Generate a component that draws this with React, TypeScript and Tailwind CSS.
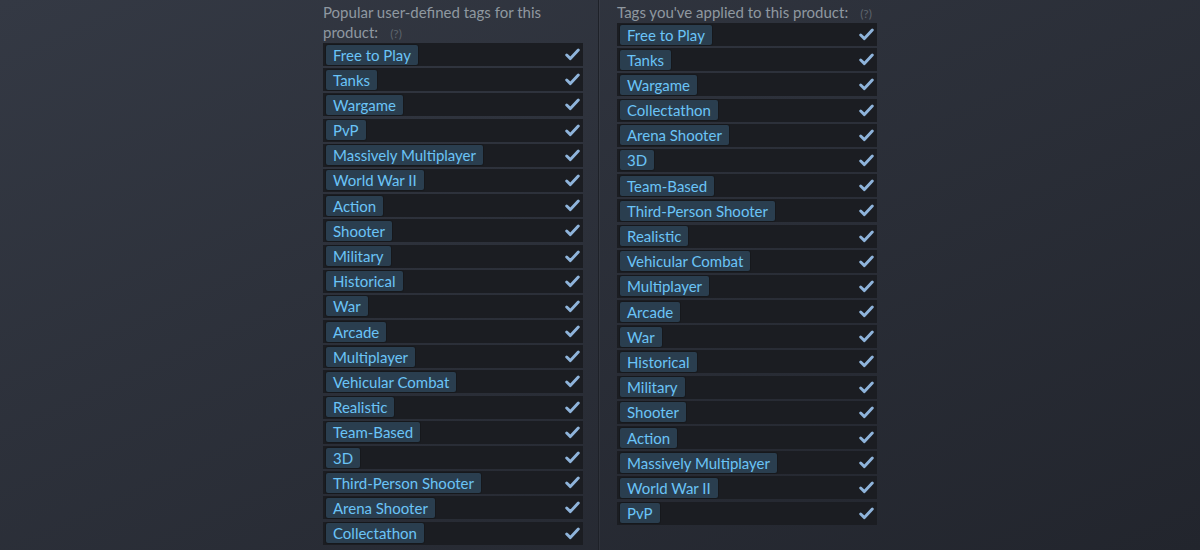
import React from 'react';

const popularTags = [
  'Free to Play',
  'Tanks',
  'Wargame',
  'PvP',
  'Massively Multiplayer',
  'World War II',
  'Action',
  'Shooter',
  'Military',
  'Historical',
  'War',
  'Arcade',
  'Multiplayer',
  'Vehicular Combat',
  'Realistic',
  'Team-Based',
  '3D',
  'Third-Person Shooter',
  'Arena Shooter',
  'Collectathon',
];

const myTags = [
  'Free to Play',
  'Tanks',
  'Wargame',
  'Collectathon',
  'Arena Shooter',
  '3D',
  'Team-Based',
  'Third-Person Shooter',
  'Realistic',
  'Vehicular Combat',
  'Multiplayer',
  'Arcade',
  'War',
  'Historical',
  'Military',
  'Shooter',
  'Action',
  'Massively Multiplayer',
  'World War II',
  'PvP',
];

function Check() {
  return (
    <svg width="15" height="13" viewBox="0 0 15 13" className="shrink-0">
      <path
        d="M1.7 7 L5.4 10.6 L13.3 2"
        fill="none"
        stroke="#8fb4db"
        strokeWidth="2.9"
        strokeLinecap="round"
        strokeLinejoin="round"
      />
    </svg>
  );
}

function TagRow({ name }: { name: string }) {
  return (
    <div className="flex h-[23px] items-center justify-between bg-[#1b1d22] pl-[3px] pr-[3px]">
      <span className="rounded-[2px] bg-[#2a3e4f] px-[7px] text-[15px] leading-[20px] text-[#6ac4f7] shadow-[0_0_0_1px_rgba(0,0,0,0.15)]">
        {name}
      </span>
      <Check />
    </div>
  );
}

function Hint() {
  return <span className="ml-3 inline-block align-baseline text-[12px] leading-none text-[#5d646c]">(?)</span>;
}

export default function App() {
  return (
    <div
      className="flex h-[550px] w-[1200px] overflow-hidden bg-gradient-to-br from-[#343944] to-[#22252d] pl-[323px]"
      style={{ fontFamily: 'Lato, "Noto Sans", sans-serif' }}
    >
      {/* Popular tags */}
      <div className="w-[260px]">
        <div className="h-[43px] pt-[2px] text-[15px] leading-[20px] text-[#8f98a0]">
          Popular user-defined tags for this product:
          <Hint />
        </div>
        <div className="flex flex-col gap-[2.2px]">
          {popularTags.map((t) => (
            <TagRow key={t} name={t} />
          ))}
        </div>
      </div>

      <div className="ml-[15px] mr-[18px] w-px bg-[#1e2128] shadow-[1px_0_0_rgba(255,255,255,0.04)]" />

      {/* Applied tags */}
      <div className="w-[260px]">
        <div className="h-[23px] pt-[2px] text-[15px] leading-[20px] text-[#8f98a0]">
          Tags you've applied to this product:
          <Hint />
        </div>
        <div className="flex flex-col gap-[2.2px]">
          {myTags.map((t) => (
            <TagRow key={t} name={t} />
          ))}
        </div>
      </div>
    </div>
  );
}
